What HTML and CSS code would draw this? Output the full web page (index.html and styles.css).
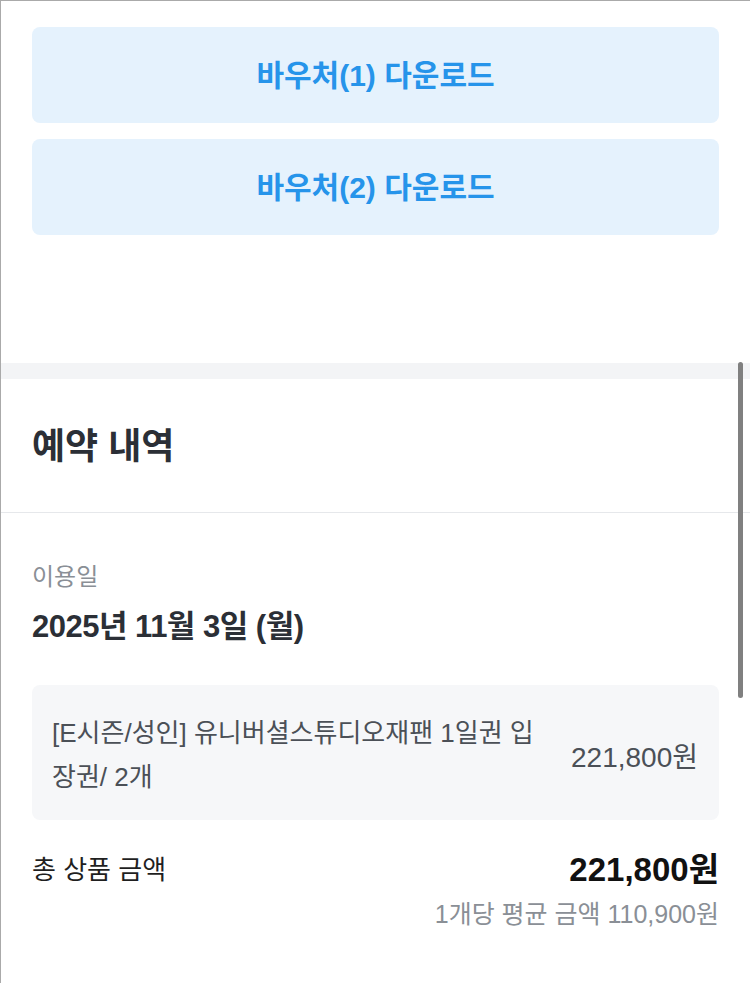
FILE: index.html
```html
<!DOCTYPE html>
<html lang="ko">
<head>
    <meta charset="UTF-8">
    <meta name="viewport" content="width=device-width, initial-scale=1.0">
    <title>예약 상세</title>
    <link rel="stylesheet" href="styles.css">
</head>
<body>
    <div class="page">
        <section class="voucher">
            <button class="voucher-btn">바우처(1) 다운로드</button>
            <button class="voucher-btn">바우처(2) 다운로드</button>
        </section>

        <div class="band"></div>

        <section class="booking">
            <h2 class="booking-title">예약 내역</h2>
            <div class="booking-body">
                <div class="label">이용일</div>
                <div class="date">2025년 11월 3일 (월)</div>

                <div class="item-box">
                    <div class="item-name">[E시즌/성인] 유니버셜스튜디오재팬 1일권 입장권/ 2개</div>
                    <div class="item-price">221,800원</div>
                </div>

                <div class="total-row">
                    <span class="total-label">총 상품 금액</span>
                    <span class="total-price">221,800원</span>
                </div>
                <div class="avg">1개당 평균 금액 110,900원</div>
            </div>
        </section>

        <div class="scrollbar"></div>
    </div>
</body>
</html>
```

FILE: styles.css
```css
body, html {
    margin: 0;
    padding: 0;
    background-color: #fff;
    font-family: "Liberation Sans", "Noto Sans CJK KR", sans-serif;
    color: #2b2f36;
}
.page {
    position: relative;
    min-height: 982px;
    border-top: 1px solid #aaa;
    border-left: 1px solid #aaa;
    overflow: hidden;
}
.voucher {
    display: flex;
    flex-direction: column;
    gap: 16px;
    padding: 26px 31px 128px 31px;
}
.voucher-btn {
    height: 96px;
    padding: 0 0 5px 0;
    border: none;
    border-radius: 8px;
    background-color: #e5f2fd;
    color: #2694ea;
    font-family: inherit;
    font-size: 30px;
    font-weight: 700;
    cursor: pointer;
}
.band {
    height: 16px;
    background-color: #f3f4f6;
}
.booking-title {
    margin: 0;
    height: 134px;
    box-sizing: border-box;
    display: flex;
    align-items: center;
    padding: 0 31px 6px 31px;
    font-size: 36px;
    font-weight: 700;
    color: #2b2f36;
    border-bottom: 1px solid #e6e8eb;
}
.booking-body {
    padding: 49px 31px 40px 31px;
}
.label {
    font-size: 24px;
    line-height: 30px;
    color: #8a8f96;
}
.date {
    margin-top: 15px;
    font-size: 31px;
    line-height: 40px;
    font-weight: 700;
    color: #2b2f36;
    letter-spacing: -0.5px;
}
.item-box {
    margin-top: 38px;
    display: flex;
    align-items: center;
    gap: 24px;
    padding: 26px 21px 21px 20px;
    background-color: #f6f7f9;
    border-radius: 8px;
    font-size: 26px;
    color: #4b5057;
}
.item-name {
    flex: 1;
    line-height: 44px;
}
.item-price {
    font-size: 28px;
    white-space: nowrap;
}
.total-row {
    margin-top: 27px;
    display: flex;
    justify-content: space-between;
    align-items: center;
    height: 40px;
}
.total-label {
    font-size: 26px;
    color: #1f1f1f;
}
.total-price {
    font-size: 33px;
    font-weight: 700;
    color: #111;
}
.avg {
    margin-top: 11px;
    text-align: right;
    font-size: 25px;
    line-height: 32px;
    color: #8a8f96;
}
.scrollbar {
    position: absolute;
    top: 361px;
    right: 7px;
    width: 5px;
    height: 336px;
    border-radius: 3px;
    background-color: #808080;
}
```
